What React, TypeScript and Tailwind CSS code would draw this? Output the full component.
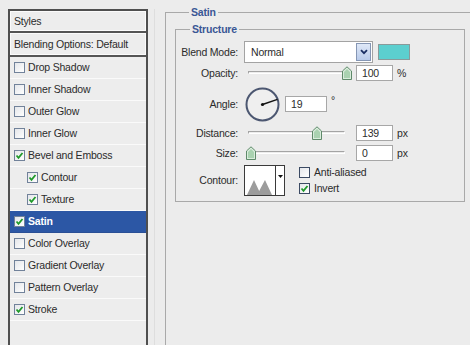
import React from "react";

const effects = [
  { name: "Drop Shadow", on: false },
  { name: "Inner Shadow", on: false },
  { name: "Outer Glow", on: false },
  { name: "Inner Glow", on: false },
  { name: "Bevel and Emboss", on: true },
  { name: "Contour", on: true, sub: true },
  { name: "Texture", on: true, sub: true },
  { name: "Satin", on: true, active: true },
  { name: "Color Overlay", on: false },
  { name: "Gradient Overlay", on: false },
  { name: "Pattern Overlay", on: false },
  { name: "Stroke", on: true },
];

function Check({ on, dark }: { on: boolean; dark?: boolean }) {
  return (
    <span
      className={`flex h-[11px] w-[11px] shrink-0 items-center justify-center border ${
        dark ? "border-[#3b4a63]" : "border-[#71829a]"
      } bg-gradient-to-br from-[#e4e6ea] to-white`}
    >
      {on && (
        <svg width="9" height="9" viewBox="0 0 9 9">
          <polyline points="1.5,4.5 3.5,6.8 7.5,2" fill="none" stroke="#1f9a2a" strokeWidth="1.8" />
        </svg>
      )}
    </span>
  );
}

function Thumb() {
  return (
    <svg width="10" height="14" viewBox="0 0 10 14">
      <path d="M0.5 5 L5 0.8 L9.5 5 V13.5 H0.5 Z" fill="#d9ecdc" stroke="#5f8a6a" />
      <path d="M2 6 L5 3 L8 6 V12 H2 Z" fill="#a9d2b0" />
    </svg>
  );
}

function Slider({ at }: { at: number }) {
  return (
    <div className="relative h-[16px] w-[108px]">
      <div className="absolute left-[4px] right-[7px] top-[6px] h-[3px] border border-[#a4a4a4] border-b-white border-r-white" />
      <div className="absolute top-[1px]" style={{ left: at }}>
        <Thumb />
      </div>
    </div>
  );
}

function Field({ value, w = 37 }: { value: string; w?: number }) {
  return (
    <div
      className="flex h-[16px] items-center border border-[#a7a7a7] bg-white pl-[5px]"
      style={{ width: w }}
    >
      {value}
    </div>
  );
}

function Row({ label, className, children }: { label: string; className: string; children: React.ReactNode }) {
  return (
    <div className={`flex items-center ${className}`}>
      <span className="w-[64px] shrink-0 pr-[2px] text-right">{label}</span>
      <div className="ml-[4px] flex items-center">{children}</div>
    </div>
  );
}

export default function App() {
  return (
    <div className="flex h-[345px] w-[470px] overflow-hidden bg-[#ececec] font-['Liberation_Sans',Arial,sans-serif] text-[10.5px] leading-[13px] tracking-[-0.2px] text-[#2b2b2b]">
      {/* effects list */}
      <div className="ml-[8px] mt-[9px] flex h-[345px] w-[140px] shrink-0 flex-col border-2 border-[#4f4f4f] bg-[#ededed]">
        <div className="flex h-[20px] items-center border border-[#fbfbfb] pl-[3px]">Styles</div>
        <div className="h-[2px] bg-[#555]" />
        <div className="flex h-[22px] items-center border border-[#fbfbfb] pl-[3px]">Blending Options: Default</div>
        <div className="h-[2px] bg-[#555]" />
        {effects.map((e) => (
          <div
            key={e.name}
            className={`flex h-[22px] items-center gap-[3px] border-b ${
              e.active ? "border-[#2a4f95] bg-[#2c57a5] font-bold text-white" : "border-[#fafafa]"
            } ${e.sub ? "pl-[17px]" : "pl-[4px]"}`}
          >
            <Check on={e.on} />
            <span>{e.name}</span>
          </div>
        ))}
      </div>

      <div className="ml-[6px] mt-[9px] h-[345px] w-px shrink-0 bg-[#dedede]" />

      {/* Satin group */}
      <fieldset className="ml-[10px] mt-[6px] h-[360px] w-[320px] shrink-0 border-l border-t border-[#a9a9a9] pl-[9px] pt-[4px]">
        <legend className="ml-[14px] px-[2px] font-bold text-[#3a5795]">Satin</legend>
        <fieldset className="h-[179px] w-[290px] border border-[#a9a9a9] pt-[5px]">
          <legend className="ml-[14px] px-[2px] font-bold text-[#3a5795]">Structure</legend>

          <Row label="Blend Mode:" className="h-[22px]">
            <div className="flex h-[22px] w-[129px] items-center justify-between border border-[#a3a3a3] bg-white pl-[6px] pr-[1px]">
              <span>Normal</span>
              <div className="flex h-[18px] w-[15px] items-center justify-center border border-[#8596b4] bg-gradient-to-b from-[#dfe8f7] to-[#b9cbea]">
                <svg width="8" height="6" viewBox="0 0 8 6">
                  <polyline points="1,1.2 4,4.2 7,1.2" fill="none" stroke="#1b2f63" strokeWidth="1.8" />
                </svg>
              </div>
            </div>
            <div className="ml-[5px] h-[16px] w-[32px] border border-[#8a9a9a] bg-[#5ccfcf]" />
          </Row>

          <Row label="Opacity:" className="mt-[2px] h-[16px]">
            <Slider at={98} />
            <div className="ml-[4px]"><Field value="100" /></div>
            <span className="ml-[4px]">%</span>
          </Row>

          <Row label="Angle:" className="mt-[6px] h-[34px]">
            <svg width="37" height="35" viewBox="0 0 37 35">
              <circle cx="18.5" cy="17.5" r="16" fill="#efefef" stroke="#4c5771" strokeWidth="2" />
              <line x1="18.5" y1="17.5" x2="33.5" y2="12.3" stroke="#111" strokeWidth="1.4" />
              <circle cx="18.5" cy="17.5" r="1.6" fill="#111" />
            </svg>
            <div className="ml-[4px]"><Field value="19" w={42} /></div>
            <span className="ml-[4px] -mt-[8px]">°</span>
          </Row>

          <Row label="Distance:" className="mt-[4px] h-[16px]">
            <Slider at={68} />
            <div className="ml-[4px]"><Field value="139" /></div>
            <span className="ml-[4px]">px</span>
          </Row>

          <Row label="Size:" className="mt-[4px] h-[16px]">
            <Slider at={2} />
            <div className="ml-[4px]"><Field value="0" /></div>
            <span className="ml-[4px]">px</span>
          </Row>

          <Row label="Contour:" className="mt-[4px] h-[31px]">
            <div className="flex h-[31px] w-[41px] border border-[#3a3a3a] bg-white">
              <svg width="30" height="29" viewBox="0 0 30 29" className="shrink-0">
                <polygon points="2,29 9,14 16,29" fill="#9c9c9c" />
                <polygon points="12,29 20,14 27,29" fill="#9c9c9c" />
              </svg>
              <div className="flex flex-1 items-start justify-center border-l border-[#3a3a3a] pt-[9px]">
                <svg width="5" height="3" viewBox="0 0 5 3">
                  <polygon points="0,0 5,0 2.5,3" fill="#111" />
                </svg>
              </div>
            </div>
            <div className="ml-[14px] flex flex-col gap-[3px]">
              <div className="flex items-center gap-[4px]">
                <Check on={false} dark />
                <span>Anti-aliased</span>
              </div>
              <div className="flex items-center gap-[4px]">
                <Check on dark />
                <span>Invert</span>
              </div>
            </div>
          </Row>
        </fieldset>
      </fieldset>
    </div>
  );
}
